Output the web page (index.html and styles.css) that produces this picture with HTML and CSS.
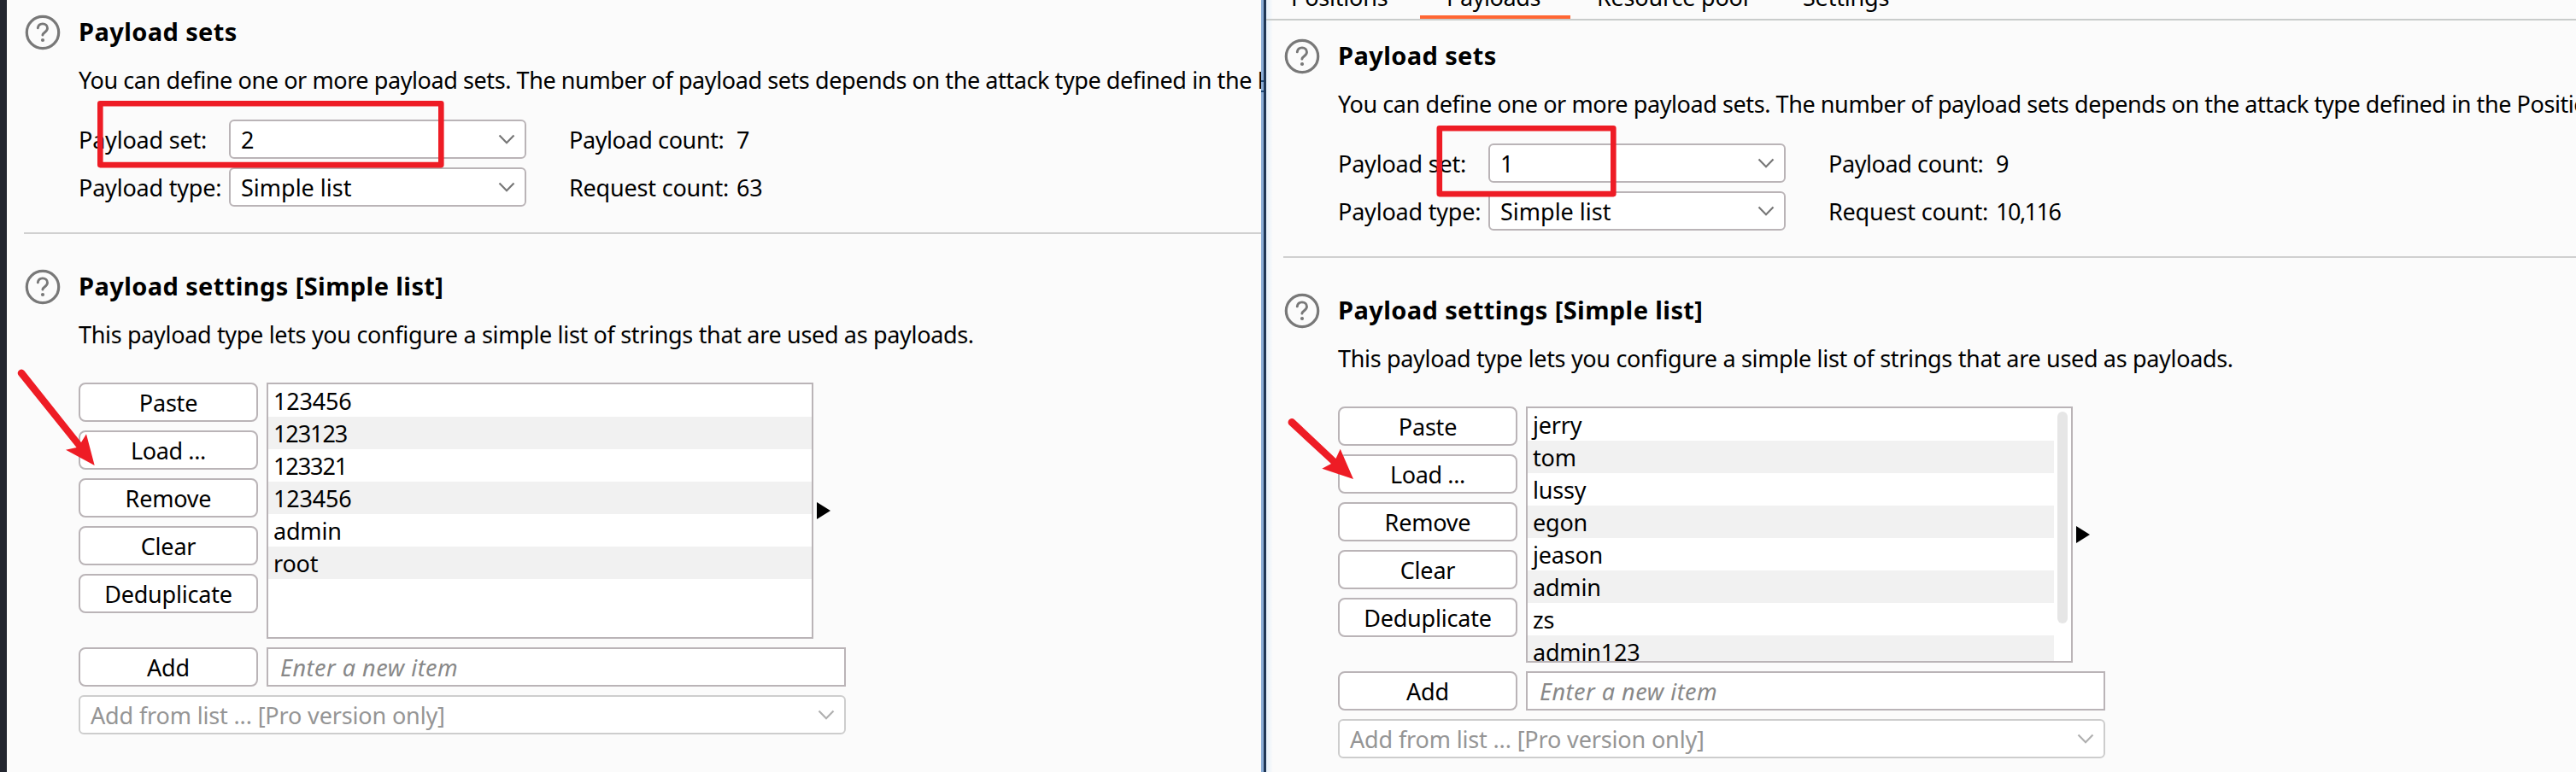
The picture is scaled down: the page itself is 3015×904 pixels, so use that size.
FILE: index.html
```html
<!DOCTYPE html>
<html lang="en">
<head>
<meta charset="utf-8">
<title>Payload sets</title>
<link rel="stylesheet" href="styles.css">
</head>
<body>
<svg class="defs" width="0" height="0" aria-hidden="true">
  <symbol id="help" viewBox="0 0 42 42">
    <circle cx="21" cy="21" r="18.700" fill="none" stroke="#787878" stroke-width="3.200"/>
    <path d="M15.300 15.800C15.800 12.300 18.200 10.900 20.900 10.900c3.300 0 5.600 2.100 5.600 5.200 0 4.500-5.200 4.500-5.600 8" fill="none" stroke="#787878" stroke-width="2.900" stroke-linecap="round"/>
    <circle cx="21" cy="30" r="2.100" fill="#787878"/>
  </symbol>
  <symbol id="chev" viewBox="0 0 20 12"><path d="M1.500 1.500 10 10.200 18.500 1.500" fill="none" stroke="currentColor" stroke-width="2.200"/></symbol>
</svg>
<main class="screen">
  <div class="edge"></div>
  <section class="panel panel-left">
    <div class="block">
      <svg class="help"><use href="#help"/></svg>
      <div class="body">
        <h2 class="title">Payload sets</h2>
        <p class="desc long">You can define one or more payload sets. The number of payload sets depends on the attack type defined in the Positions tab.</p>
        <div class="fields">
          <span class="label">Payload set:</span><div class="select"><span>2</span><svg class="chev"><use href="#chev"/></svg></div><span class="count payload">Payload count:</span><span class="value">7</span>
          <span class="label">Payload type:</span><div class="select"><span>Simple list</span><svg class="chev"><use href="#chev"/></svg></div><span class="count">Request count:</span><span class="value">63</span>
        </div>
      </div>
    </div>
    <hr class="rule">
    <div class="block">
      <svg class="help"><use href="#help"/></svg>
      <div class="body">
        <h2 class="title">Payload settings [Simple list]</h2>
        <p class="desc short">This payload type lets you configure a simple list of strings that are used as payloads.</p>
        <div class="editor">
          <div class="buttons">
            <button class="btn">Paste</button><button class="btn load">Load ...</button><button class="btn">Remove</button><button class="btn">Clear</button><button class="btn">Deduplicate</button>
          </div>
          <ul class="list"><li>123456</li><li class="ones">123123</li><li class="ones">123321</li><li>123456</li><li>admin</li><li>root</li></ul>
          <svg class="play" viewBox="0 0 16 20"><path d="M0 0 16 10 0 20z"/></svg>
        </div>
        <div class="addrow"><button class="btn">Add</button><div class="input">Enter a new item</div></div>
        <div class="select disabled"><span>Add from list ... [Pro version only]</span><svg class="chev"><use href="#chev"/></svg></div>
      </div>
    </div>
  </section>
  <div class="divider"></div>
  <section class="panel panel-right">
    <nav class="tabs"><span class="tab positions">Positions</span><span class="tab active">Payloads</span><span class="tab pool">Resource pool</span><span class="tab">Settings</span></nav>
    <div class="block">
      <svg class="help"><use href="#help"/></svg>
      <div class="body">
        <h2 class="title">Payload sets</h2>
        <p class="desc long">You can define one or more payload sets. The number of payload sets depends on the attack type defined in the Positions tab.</p>
        <div class="fields">
          <span class="label">Payload set:</span><div class="select"><span>1</span><svg class="chev"><use href="#chev"/></svg></div><span class="count payload">Payload count:</span><span class="value">9</span>
          <span class="label">Payload type:</span><div class="select"><span>Simple list</span><svg class="chev"><use href="#chev"/></svg></div><span class="count">Request count:</span><span class="value total">10,116</span>
        </div>
      </div>
    </div>
    <hr class="rule">
    <div class="block">
      <svg class="help"><use href="#help"/></svg>
      <div class="body">
        <h2 class="title">Payload settings [Simple list]</h2>
        <p class="desc short">This payload type lets you configure a simple list of strings that are used as payloads.</p>
        <div class="editor">
          <div class="buttons">
            <button class="btn">Paste</button><button class="btn load">Load ...</button><button class="btn">Remove</button><button class="btn">Clear</button><button class="btn">Deduplicate</button>
          </div>
          <ul class="list scrolls"><li>jerry</li><li>tom</li><li>lussy</li><li>egon</li><li>jeason</li><li>admin</li><li>zs</li><li>admin123</li></ul>
          <svg class="play" viewBox="0 0 16 20"><path d="M0 0 16 10 0 20z"/></svg>
        </div>
        <div class="addrow"><button class="btn">Add</button><div class="input">Enter a new item</div></div>
        <div class="select disabled"><span>Add from list ... [Pro version only]</span><svg class="chev"><use href="#chev"/></svg></div>
      </div>
    </div>
  </section>
  <svg class="marks" viewBox="0 0 3015 904">
    <g fill="none" stroke="#ee1c25" stroke-width="6.600" stroke-linejoin="round">
      <rect x="117.300" y="121.300" width="399" height="71.800"/>
      <rect x="1684.800" y="150.300" width="203.500" height="76.800"/>
    </g>
    <g fill="#ee1c25">
      <path d="M21.500 439.200 89.600 524 77 526.700 110.700 545 101 508.300 95 518 28.300 434a4.300 4.300 0 0 0-6.800 5.200z"/>
      <path d="M1509 497.800 1558 543 1547.300 548.700 1584 561 1568.700 525.700 1563.500 537 1515 491.200a4.400 4.400 0 0 0-6 6.600z"/>
    </g>
  </svg>
</main>
</body>
</html>
```
FILE: styles.css
```css
* { box-sizing: border-box; }
body {
  margin: 0;
  background: #fbfbfb;
  color: #000;
  font: 27px/38px "Noto Sans", "Open Sans", sans-serif;
  letter-spacing: -0.2px;
  overflow: hidden;
}
.defs { display: none; }
.screen { display: flex; position: relative; width: 3015px; height: 904px; overflow: hidden; }
.edge { width: 8px; flex: none; background: #23262f; }
.panel { overflow: hidden; background: #fbfbfb; }
.panel-left { width: 1468px; flex: none; }
.divider {
  width: 6px; flex: none;
  background:
    linear-gradient(#1f4a78, #1f4a78) 0 94px / 3px 2px no-repeat,
    linear-gradient(#1f4a78, #1f4a78) 0 106px / 3px 2px no-repeat,
    linear-gradient(90deg, #8badd6 3px, #1f3655 3px);
}
.panel-right { flex: 1; min-width: 0; background: linear-gradient(90deg, #e6f0fa, #fbfbfb 8px); }
.tabs { display: flex; height: 24px; margin-bottom: 4px; border-bottom: 2px solid #c9cccb; overflow: hidden; }
.tab { height: 44px; margin-top: -22px; padding-left: 31px; white-space: nowrap; }
.tab.positions { width: 180px; padding-left: 29px; }
.tab.active { width: 176px; border-bottom: 4px solid #ff6633; letter-spacing: -0.4px; }
.tab.pool { width: 241px; }
.block { display: flex; gap: 21px; padding: 14px 0 0 21px; }
.help { width: 42px; height: 42px; margin-top: 3px; flex: none; }
.body { flex: 1; min-width: 0; }
.title { margin: 0; height: 61px; font-size: 29px; line-height: 46px; font-weight: 700; letter-spacing: 0.4px; white-space: nowrap; }
.desc { margin: 0 0 27px; white-space: nowrap; }
.desc.long { letter-spacing: -0.418px; }
.desc.short { margin-bottom: 37px; letter-spacing: -0.33px; }
.fields { display: grid; grid-template-columns: 176px 348px 50px 196px 1fr; grid-auto-rows: 46px; row-gap: 10px; line-height: 48px; white-space: nowrap; }
.count { grid-column: 4; }
.count.payload { letter-spacing: -0.4px; }
.value.total { letter-spacing: -1.5px; }
.select {
  display: flex; align-items: center; justify-content: space-between;
  height: 46px; padding: 0 11px 0 12px;
  background: #fff; border: 2px solid #bab4b7; border-radius: 6px; color: #000; letter-spacing: 0;
}
.select span { padding-top: 2px; line-height: 38px; }
.chev { width: 20px; height: 12px; color: #777; }
.rule { height: 2px; margin: 30px 0 24px 20px; border: 0; background: #d0d0d0; }
.editor { display: flex; align-items: center; height: 300px; }
.buttons { display: flex; flex-direction: column; gap: 10px; width: 210px; height: 300px; margin-right: 10px; }
.btn {
  width: 210px; height: 46px; padding: 2px 0 0; flex: none;
  background: #fff; border: 2px solid #bab4b7; border-radius: 8px;
  color: #000; font: inherit; letter-spacing: -0.2px; text-align: center;
}
.btn.load { letter-spacing: -0.4px; }
.list {
  position: relative; width: 640px; height: 300px; margin: 0; padding: 0;
  list-style: none; overflow: hidden; background: #fff; border: 2px solid #bab4b7;
}
.list li { height: 38px; padding: 1px 0 0 6px; }
.list li:nth-child(even) { background: #f1f1f1; }
.list .ones { letter-spacing: -1.1px; }
.list.scrolls { padding-right: 20px; }
.scrolls::after {
  content: ""; position: absolute; top: 4px; right: 4px;
  width: 12px; height: 248px; border-radius: 6px; background: #e6e6e6;
}
.play { width: 16px; height: 20px; margin-left: 4px; }
.addrow { display: flex; gap: 10px; margin: 10px 0; }
.input {
  width: 678px; height: 46px; padding-left: 14px; line-height: 44px;
  background: #fff; border: 2px solid #bab4b7; color: #888; font-style: italic; letter-spacing: 0.5px;
}
.select.disabled { width: 898px; border-color: #cdcdcd; color: #959595; letter-spacing: -0.15px; }
.disabled .chev { color: #b0b0b0; }
.marks { position: absolute; inset: 0; width: 3015px; height: 904px; pointer-events: none; }
```
